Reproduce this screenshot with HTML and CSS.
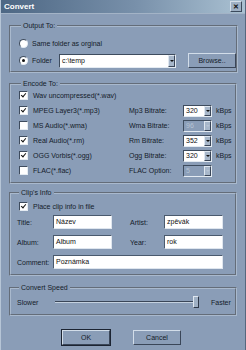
FILE: index.html
```html
<!DOCTYPE html>
<html lang="en">
<head>
  <meta charset="UTF-8" />
  <title>Convert</title>
  <link rel="stylesheet" href="styles.css">
</head>
<body>

<div class="window">
  <div class="titlebar">
    <span class="title">Convert</span>
    <span class="close">&#x2715;</span>
  </div>

  <div class="content">

    <fieldset class="group g-output">
      <legend>Output To:</legend>
      <div class="row">
        <span class="radio"></span>
        <span>Same folder as orginal</span>
      </div>
      <div class="row">
        <span class="radio on"></span>
        <span class="folder-label">Folder</span>
        <div class="combo folder-combo"><span class="val">c:\temp</span><span class="arrow"></span></div>
        <button class="btn browse">Browse..</button>
      </div>
    </fieldset>

    <fieldset class="group g-encode">
      <legend>Encode To:</legend>
      <div class="enc-row">
        <div class="chk-cell"><span class="check on"></span><span>Wav uncompressed(*.wav)</span></div>
      </div>
      <div class="enc-row">
        <div class="chk-cell"><span class="check on"></span><span>MPEG Layer3(*.mp3)</span></div>
        <span>Mp3 Bitrate:</span>
        <div class="combo small"><span class="val">320</span><span class="arrow"></span></div>
        <span class="unit">kBps</span>
      </div>
      <div class="enc-row">
        <div class="chk-cell"><span class="check"></span><span>MS Audio(*.wma)</span></div>
        <span>Wma Bitrate:</span>
        <div class="combo small disabled"><span class="val">96</span><span class="arrow"></span></div>
        <span class="unit">kBps</span>
      </div>
      <div class="enc-row">
        <div class="chk-cell"><span class="check on"></span><span>Real Audio(*.rm)</span></div>
        <span>Rm Bitrate:</span>
        <div class="combo small"><span class="val">352</span><span class="arrow"></span></div>
        <span class="unit">kBps</span>
      </div>
      <div class="enc-row">
        <div class="chk-cell"><span class="check on"></span><span>OGG Vorbis(*.ogg)</span></div>
        <span>Ogg Bitrate:</span>
        <div class="combo small"><span class="val">320</span><span class="arrow"></span></div>
        <span class="unit">kBps</span>
      </div>
      <div class="enc-row">
        <div class="chk-cell"><span class="check"></span><span>FLAC(*.flac)</span></div>
        <span>FLAC Option:</span>
        <div class="combo small disabled"><span class="val">5</span><span class="arrow"></span></div>
      </div>
    </fieldset>

    <fieldset class="group g-clip">
      <legend>Clip's Info</legend>
      <div class="row place">
        <span class="check on"></span>
        <span>Place clip info in file</span>
      </div>
      <div class="clip-grid">
        <span>Title:</span>
        <div class="field">Název</div>
        <span class="lbl2">Artist:</span>
        <div class="field">zpěvák</div>
        <span>Album:</span>
        <div class="field">Album</div>
        <span class="lbl2">Year:</span>
        <div class="field">rok</div>
        <span>Comment:</span>
        <div class="field wide">Poznámka</div>
      </div>
    </fieldset>

    <fieldset class="group g-speed">
      <legend>Convert Speed</legend>
      <div class="speed-row">
        <span>Slower</span>
        <div class="slider"><div class="track"></div><div class="thumb"></div></div>
        <span>Faster</span>
      </div>
    </fieldset>

    <div class="buttons">
      <button class="btn default">OK</button>
      <button class="btn">Cancel</button>
    </div>

  </div>
</div>

</body>
</html>
```

FILE: styles.css
```css
body {
  margin: 0;
  background: #8a9db7;
  font-family: "Liberation Sans", Arial, sans-serif;
  font-size: 7px;
  color: #141c2a;
}

.window {
  width: 246px;
  height: 350px;
  box-sizing: border-box;
  background: #8a9db7;
  border-left: 1px solid #b6c5d6;
  border-right: 1px solid #56677e;
  overflow: hidden;
}

.titlebar {
  height: 13px;
  display: flex;
  align-items: center;
  justify-content: space-between;
  padding: 0 3px 0 3px;
  background: linear-gradient(to right, #4d6784, #7890aa 55%, #aac1d2);
  border-bottom: 1px solid #a3b3c6;
}

.title {
  color: #fff;
  font-weight: bold;
  font-size: 8px;
}

.close {
  width: 10px;
  height: 9px;
  background: #9eb0c4;
  border: 1px solid;
  border-color: #d4dee9 #3c4a5c #3c4a5c #d4dee9;
  font-size: 7px;
  line-height: 9px;
  text-align: center;
  font-weight: bold;
  color: #111;
}

.content {
  padding: 0 8px;
}

.group {
  margin: 0;
  padding: 0 0 0 8px;
  border: 2px groove #a9b9cd;
  box-sizing: border-box;
}

.group legend {
  padding: 0 2px;
  margin-left: 2px;
  line-height: 8px;
  height: 8px;
}

.row {
  display: flex;
  align-items: center;
  gap: 4px;
  height: 14px;
}

/* Output To */
.g-output {
  margin-top: 8px;
  height: 51px;
  padding-top: 6px;
}

.g-output .row + .row {
  margin-top: 3px;
  height: 15px;
}

.folder-label {
  width: 23px;
}

.folder-combo {
  width: 117px;
}

.browse {
  margin-left: 8px;
  width: 38px;
  height: 15px;
}

/* Encode To */
.g-encode {
  margin-top: 7px;
  height: 104px;
}

.enc-row {
  display: grid;
  grid-template-columns: 110px 54px 29px auto;
  align-items: center;
  height: 15px;
}

.chk-cell {
  display: flex;
  align-items: center;
  gap: 5px;
}

.unit {
  padding-left: 4px;
}

/* Clip's Info */
.g-clip {
  margin-top: 5px;
  height: 87px;
  padding-left: 6px;
}

.place {
  margin-top: 2px;
  padding-left: 2px;
  gap: 5px;
}

.clip-grid {
  display: grid;
  grid-template-columns: 36px 59px 52px 59px;
  grid-auto-rows: 14px;
  row-gap: 6px;
  align-items: center;
  margin-top: 2px;
}

.lbl2 {
  padding-left: 18px;
}

.field {
  height: 14px;
  box-sizing: border-box;
  background: #fff;
  border: 1px solid;
  border-color: #4a5a6e #dfe6ee #dfe6ee #4a5a6e;
  padding: 0 2px;
  line-height: 12px;
  color: #111;
}

.field.wide {
  grid-column: 2 / 5;
}

/* Convert Speed */
.g-speed {
  margin-top: 8px;
  height: 32px;
  padding-left: 6px;
}

.speed-row {
  display: flex;
  align-items: center;
  height: 20px;
}

.speed-row span:first-child {
  width: 38px;
}

.slider {
  position: relative;
  width: 144px;
  height: 12px;
  margin-right: 12px;
}

.track {
  position: absolute;
  left: 0;
  right: 0;
  top: 5px;
  height: 0;
  border-top: 1px solid #3a4658;
  border-bottom: 1px solid #c4d1df;
}

.thumb {
  position: absolute;
  right: 0;
  top: 0;
  width: 4px;
  height: 10px;
  background: #9fb0c4;
  border: 1px solid;
  border-color: #dfe7f0 #2e394a #2e394a #dfe7f0;
}

/* buttons */
.buttons {
  display: flex;
  gap: 23px;
  margin-top: 14px;
  padding-left: 53px;
}

.btn {
  font-family: "Liberation Sans", Arial, sans-serif;
  font-size: 7px;
  color: #141c2a;
  background: #8a9db7;
  border: 1px solid;
  border-color: #d2dde9 #3a4658 #3a4658 #d2dde9;
  padding: 0;
  width: 48px;
  height: 15px;
}

.btn.default {
  outline: 1px solid #1c2432;
}

/* controls */
.radio {
  width: 7px;
  height: 7px;
  border-radius: 50%;
  background: #fff;
  border: 1px solid;
  border-color: #3e4c5e #e4ebf2 #e4ebf2 #3e4c5e;
  position: relative;
}

.radio.on::after {
  content: "";
  position: absolute;
  left: 2px;
  top: 2px;
  width: 3px;
  height: 3px;
  border-radius: 50%;
  background: #111;
}

.check {
  width: 7px;
  height: 7px;
  background: #fff;
  border: 1px solid;
  border-color: #3e4c5e #e4ebf2 #e4ebf2 #3e4c5e;
  position: relative;
}

.check.on::after {
  content: "";
  position: absolute;
  left: 2px;
  top: 0px;
  width: 2px;
  height: 4px;
  border: solid #111;
  border-width: 0 1.5px 1.5px 0;
  transform: rotate(40deg);
}

.combo {
  height: 12px;
  box-sizing: border-box;
  background: #fff;
  border: 1px solid;
  border-color: #3e4c5e #e4ebf2 #e4ebf2 #3e4c5e;
  display: flex;
  align-items: center;
  justify-content: space-between;
  color: #111;
}

.folder-combo {
  height: 14px;
}

.combo .val {
  padding-left: 2px;
}

.combo .arrow {
  width: 7px;
  height: 100%;
  box-sizing: border-box;
  background: #a7b7ca;
  border: 1px solid;
  border-color: #dfe7f0 #3a4658 #3a4658 #dfe7f0;
  position: relative;
}

.combo .arrow::after {
  content: "";
  position: absolute;
  left: 1px;
  top: 50%;
  margin-top: -1px;
  border-left: 2px solid transparent;
  border-right: 2px solid transparent;
  border-top: 2px solid #111;
}

.combo.disabled {
  background: #8a9db7;
  color: #b7c4d4;
}

.combo.disabled .arrow::after {
  border-top-color: #b7c4d4;
}
```
